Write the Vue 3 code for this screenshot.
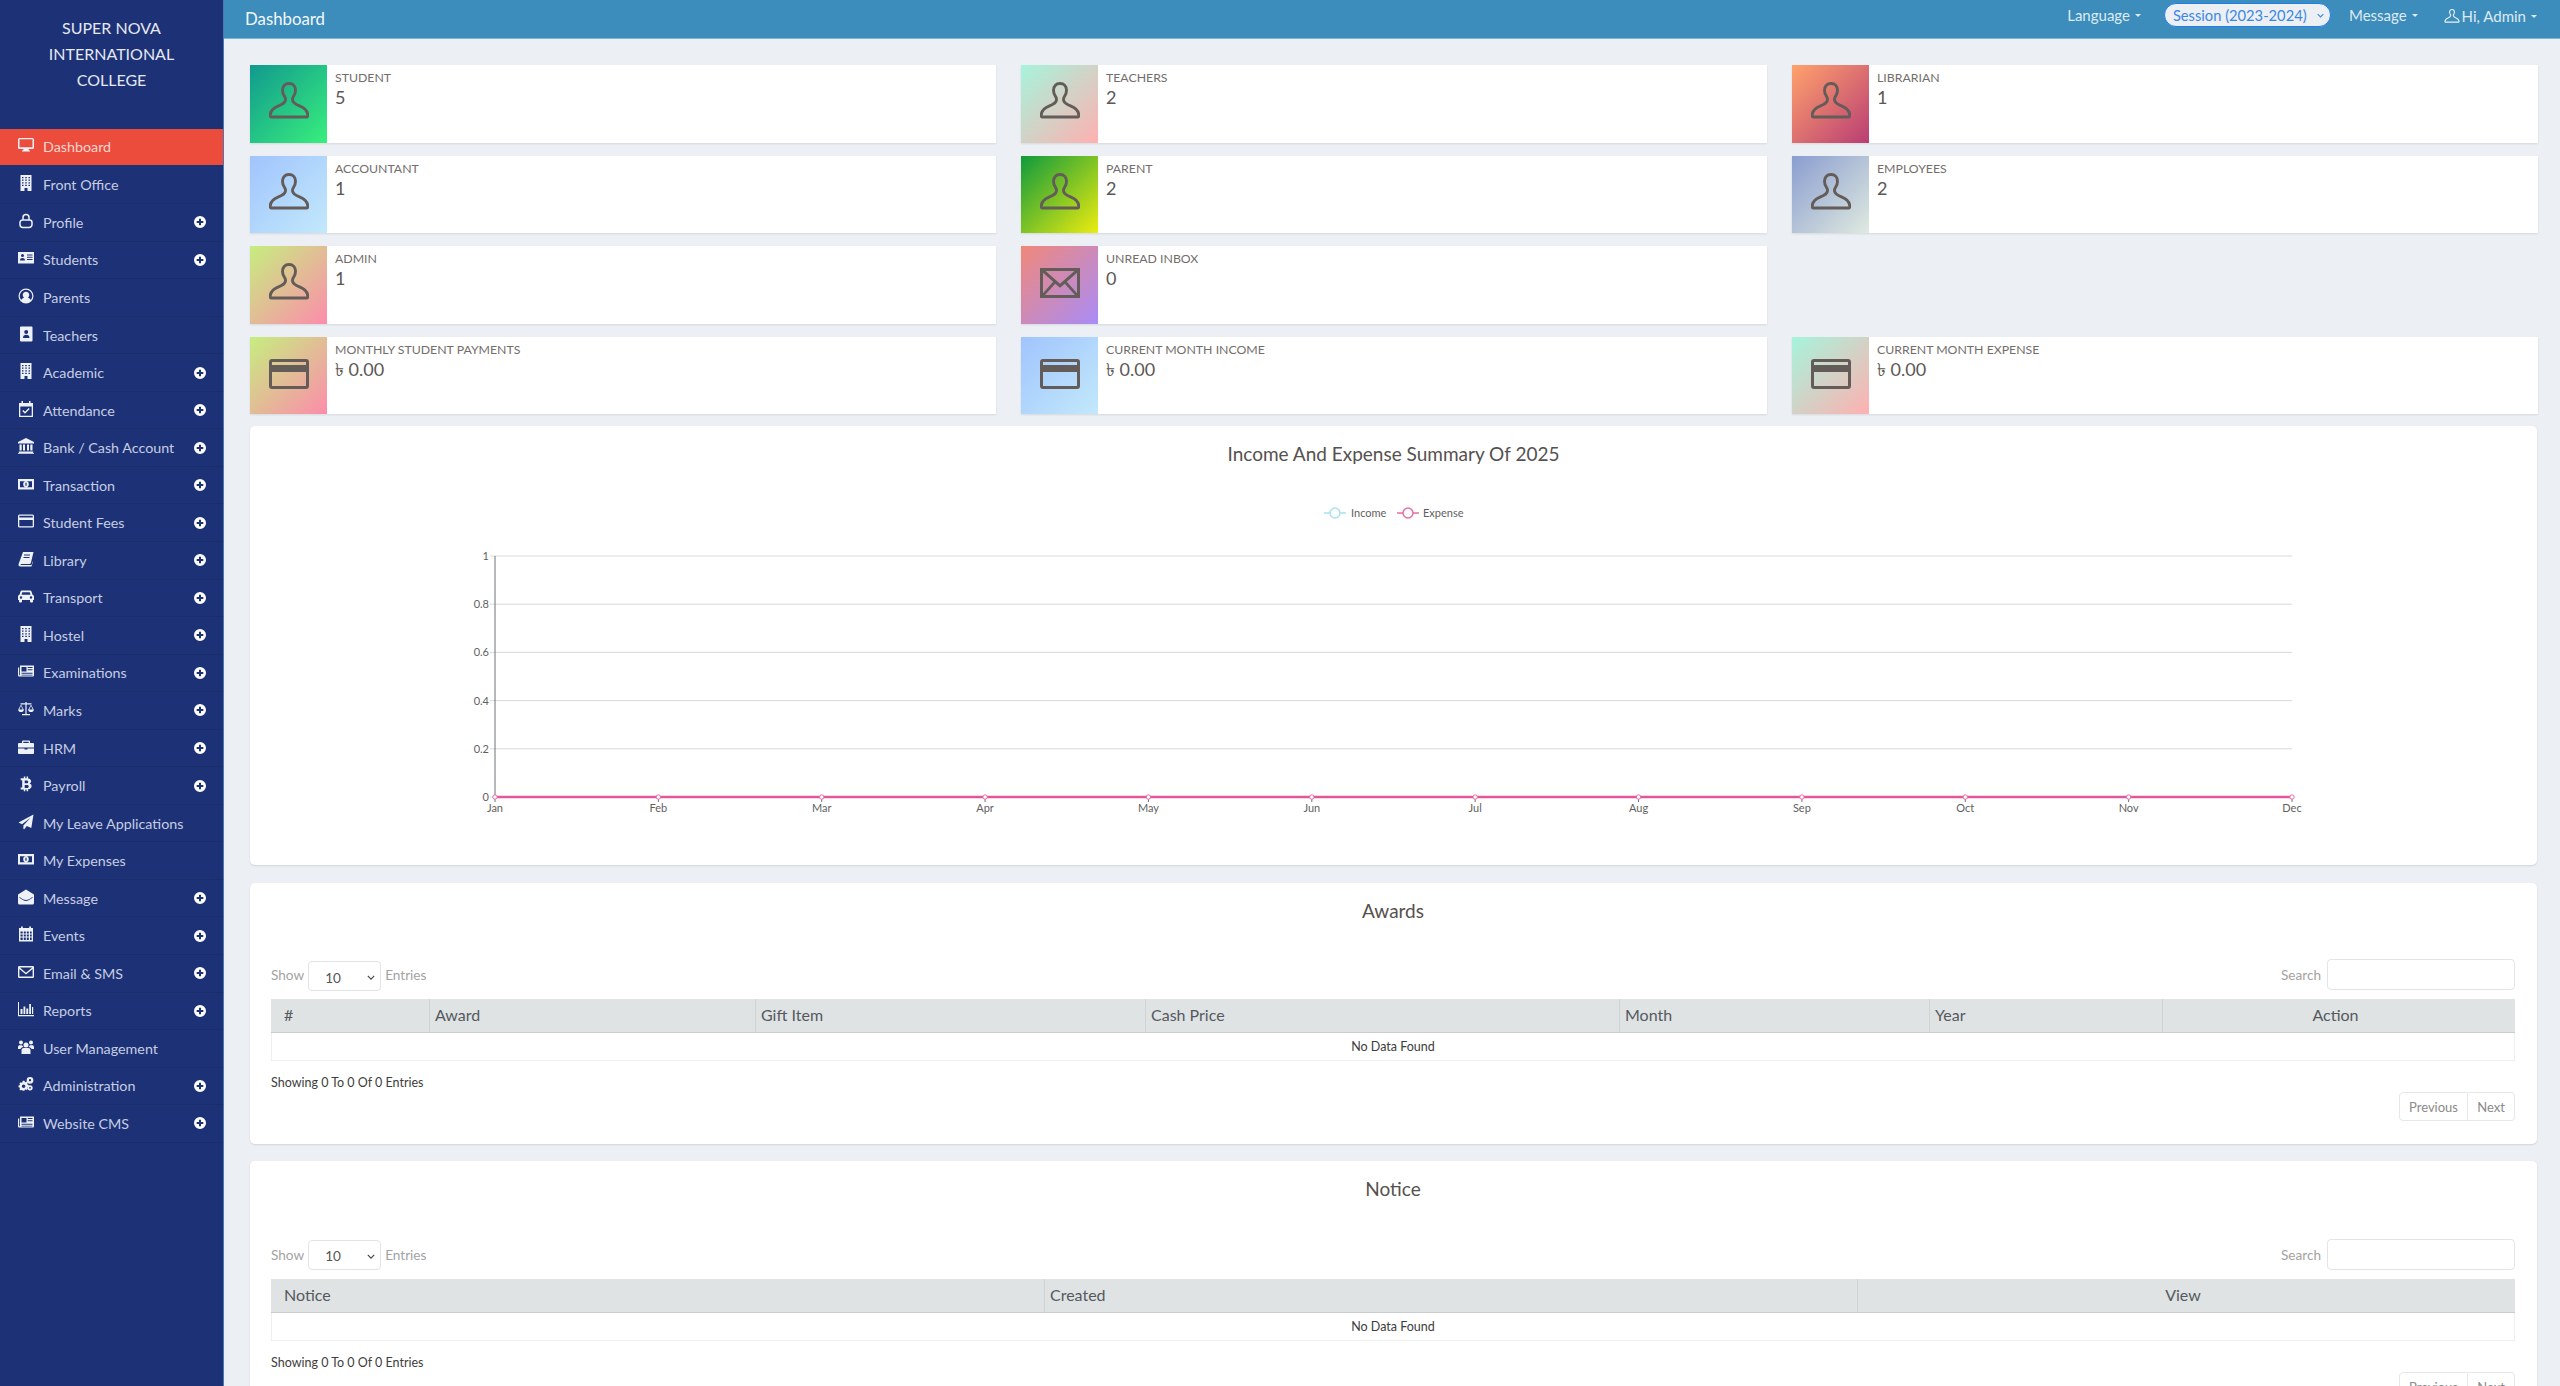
<script setup>
const menu = [
  { label: 'Dashboard', icon: 'monitor', active: true },
  { label: 'Front Office', icon: 'building' },
  { label: 'Profile', icon: 'lock', more: true },
  { label: 'Students', icon: 'idcard', more: true },
  { label: 'Parents', icon: 'usercircle' },
  { label: 'Teachers', icon: 'contact' },
  { label: 'Academic', icon: 'building', more: true },
  { label: 'Attendance', icon: 'calcheck', more: true },
  { label: 'Bank / Cash Account', icon: 'bank', more: true },
  { label: 'Transaction', icon: 'money', more: true },
  { label: 'Student Fees', icon: 'card', more: true },
  { label: 'Library', icon: 'book', more: true },
  { label: 'Transport', icon: 'car', more: true },
  { label: 'Hostel', icon: 'building', more: true },
  { label: 'Examinations', icon: 'news', more: true },
  { label: 'Marks', icon: 'scale', more: true },
  { label: 'HRM', icon: 'briefcase', more: true },
  { label: 'Payroll', icon: 'bitcoin', more: true },
  { label: 'My Leave Applications', icon: 'plane' },
  { label: 'My Expenses', icon: 'money' },
  { label: 'Message', icon: 'envelopeopen', more: true },
  { label: 'Events', icon: 'calendar', more: true },
  { label: 'Email & SMS', icon: 'mail', more: true },
  { label: 'Reports', icon: 'chart', more: true },
  { label: 'User Management', icon: 'users' },
  { label: 'Administration', icon: 'gears', more: true },
  { label: 'Website CMS', icon: 'news', more: true }
]

const stats = [
  { label: 'Student', value: '5', icon: 'user', grad: 'g-student' },
  { label: 'Teachers', value: '2', icon: 'user', grad: 'g-teacher' },
  { label: 'Librarian', value: '1', icon: 'user', grad: 'g-librarian' },
  { label: 'Accountant', value: '1', icon: 'user', grad: 'g-blue' },
  { label: 'Parent', value: '2', icon: 'user', grad: 'g-parent' },
  { label: 'Employees', value: '2', icon: 'user', grad: 'g-employee' },
  { label: 'Admin', value: '1', icon: 'user', grad: 'g-admin' },
  { label: 'Unread Inbox', value: '0', icon: 'mail', grad: 'g-inbox' },
  null,
  { label: 'Monthly Student Payments', value: '৳ 0.00', icon: 'card', grad: 'g-admin' },
  { label: 'Current Month Income', value: '৳ 0.00', icon: 'card', grad: 'g-blue' },
  { label: 'Current Month Expense', value: '৳ 0.00', icon: 'card', grad: 'g-teacher' }
]

/* chart geometry */
const chartLeft = 245
const chartRight = 2042
const months = ['Jan', 'Feb', 'Mar', 'Apr', 'May', 'Jun', 'Jul', 'Aug', 'Sep', 'Oct', 'Nov', 'Dec']
const monthX = (i) => chartLeft + (i * (chartRight - chartLeft)) / 11
const ticks = [
  { label: '1', y: 70 },
  { label: '0.8', y: 118.2 },
  { label: '0.6', y: 166.4 },
  { label: '0.4', y: 214.6 },
  { label: '0.2', y: 262.8 },
  { label: '0', y: 311 }
]

const tables = [
  {
    title: 'Awards',
    key: 'awards',
    cols: [
      { name: '#', w: 159, pad: true },
      { name: 'Award', w: 326 },
      { name: 'Gift Item', w: 390 },
      { name: 'Cash Price', w: 474 },
      { name: 'Month', w: 310 },
      { name: 'Year', w: 233 },
      { name: 'Action', w: 352, center: true }
    ]
  },
  {
    title: 'Notice',
    key: 'notice',
    cols: [
      { name: 'Notice', w: 774, pad: true },
      { name: 'Created', w: 813 },
      { name: 'View', w: 657, center: true }
    ]
  }
]
</script>

<template>
  <div class="page">
    <!-- Shared icon shapes -->
    <svg class="defs" width="0" height="0">
      <defs>
        <symbol id="monitor" viewBox="0 0 16 16"><path fill="currentColor" fill-rule="evenodd" d="M1.5 1h13A1.5 1.5 0 0 1 16 2.5v8a1.5 1.5 0 0 1-1.5 1.5H10.5l.5 1.5h1v1H4v-1h1l.5-1.5H1.5A1.5 1.5 0 0 1 0 10.5v-8A1.5 1.5 0 0 1 1.5 1zm0 1.3v7.900h13V2.300z"/></symbol>
        <symbol id="building" viewBox="0 0 16 16"><path fill="currentColor" fill-rule="evenodd" d="M2.5 0h11v16H9.5v-3h-3v3h-4zM4 2v1.200h1.500V2zm3.200 0v1.200h1.600V2zm3.300 0v1.200H12V2zM4 4.600v1.200h1.500V4.600zm3.200 0v1.200h1.600V4.600zm3.300 0v1.200H12V4.600zM4 7.200v1.200h1.500V7.200zm3.200 0v1.200h1.600V7.200zm3.300 0v1.200H12V7.200zM4 9.800V11h1.500V9.800zm3.200 0V11h1.600V9.800zm3.300 0V11H12V9.800z"/></symbol>
        <symbol id="lock" viewBox="0 0 16 16"><path fill="none" stroke="currentColor" stroke-width="1.5" d="M5 7V4.500a3 3 0 0 1 6 0V7M4.500 7h7A2.500 2.500 0 0 1 14 9.500v2a3 3 0 0 1-3 3H5a3 3 0 0 1-3-3v-2A2.500 2.500 0 0 1 4.500 7z"/></symbol>
        <symbol id="idcard" viewBox="0 0 16 16"><path fill="currentColor" fill-rule="evenodd" d="M0 2h16v11.500H0zM4.500 4a1.500 1.500 0 1 0 0 3 1.500 1.500 0 0 0 0-3zM2 10.500h5C7 8.800 6 8 4.500 8S2 8.800 2 10.500zM9 4.500V5.500h5.500V4.500zM9 6.800v1h5.500v-1zM9 9v1h5.500V9z"/></symbol>
        <symbol id="usercircle" viewBox="0 0 16 16"><path fill="currentColor" fill-rule="evenodd" d="M8 .5a7.500 7.500 0 1 0 0 15 7.500 7.500 0 0 0 0-15zm0 1.300a6.200 6.200 0 0 1 4.800 10.100C12 10.500 10.800 10 10 9.700a3.300 3.300 0 1 0-4 0c-.8.300-2 .8-2.800 2.200A6.200 6.200 0 0 1 8 1.800z"/></symbol>
        <symbol id="contact" viewBox="0 0 16 16"><path fill="currentColor" fill-rule="evenodd" d="M3 .5h10.500a1 1 0 0 1 1 1v13a1 1 0 0 1-1 1H3a1 1 0 0 1-1-1v-13a1 1 0 0 1 1-1zM8.200 4a2 2 0 1 0 0 4 2 2 0 0 0 0-4zM5 12h6.500c0-2-1.300-3.200-3.200-3.200S5 10 5 12z"/></symbol>
        <symbol id="calcheck" viewBox="0 0 16 16"><path fill="currentColor" fill-rule="evenodd" d="M3.500 0h1.500v2h6V0h1.500v2H15v14H1V2h2.500zM2.300 5.500v9.200h11.400V5.500zM7 12.800l-2.700-2.700 1-1L7 10.800l3.700-3.700 1 1z"/></symbol>
        <symbol id="bank" viewBox="0 0 16 16"><path fill="currentColor" d="M8 0l8 4v1.500H0V4zM1.500 6.500h2.200v6H1.500zM5 6.500h2v6H5zM9 6.500h2v6H9zM12.300 6.500h2.200v6h-2.200zM.8 13.500h14.400V15H.8zM0 15.300h16V16H0z"/></symbol>
        <symbol id="money" viewBox="0 0 16 16"><path fill="currentColor" fill-rule="evenodd" d="M0 3h16v10.500H0zM2 5.200v6.100h12V5.200zM8 5.300a2.800 3 0 1 1 0 6 2.800 3 0 0 1 0-6zM7.400 6.800v3h1.200v-3z"/></symbol>
        <symbol id="card" viewBox="0 0 16 16"><path fill="currentColor" fill-rule="evenodd" d="M1.500 1.500h13A1.500 1.500 0 0 1 16 3v10a1.500 1.500 0 0 1-1.500 1.500h-13A1.500 1.500 0 0 1 0 13V3a1.500 1.500 0 0 1 1.500-1.500zm-.2 1.300V4.500h13.400V2.800zm0 4.200v6.200h13.400V7z"/></symbol>
        <symbol id="book" viewBox="0 0 16 16"><path fill="currentColor" fill-rule="evenodd" d="M5 1h10.500l-2.500 10.500c-.3 1-.8 1.500-2 1.500H3.500c-.8 0-1 .5-.8 1h9.800c.8 0 1.200-.4 1.500-1l.6-2.500.4.500-1.600 4.500H2.500C1 15.500.2 14.300.6 13zM6 3.500v1h6v-1zM5.500 6v1h6V6z"/></symbol>
        <symbol id="car" viewBox="0 0 16 16"><path fill="currentColor" fill-rule="evenodd" d="M4 2.500h8c.7 0 1.300.4 1.500 1l1 3.200c.9.300 1.500 1 1.500 2V12h-1v1.500a1 1 0 0 1-1 1h-1a1 1 0 0 1-1-1V12H4v1.500a1 1 0 0 1-1 1H2a1 1 0 0 1-1-1V12H0V8.700c0-1 .6-1.700 1.500-2l1-3.200c.2-.6.800-1 1.500-1zM4.300 4.200L3.500 6.700h9l-.8-2.500zM3 8.300a1.200 1.200 0 1 0 0 2.400 1.200 1.200 0 0 0 0-2.400zm10 0a1.200 1.200 0 1 0 0 2.400 1.200 1.200 0 0 0 0-2.400z"/></symbol>
        <symbol id="news" viewBox="0 0 16 16"><path fill="currentColor" fill-rule="evenodd" d="M2 2.500h14v10a1 1 0 0 1-1 1H1a1 1 0 0 1-1-1V4.500h1.200v7.500a.4.4 0 0 0 .8 0zM3.500 4v4.500h5V4zm6.200 0v1h4.800V4zm0 2.200v1h4.800v-1zM3.500 9.800v1h11v-1zm0 1.900v.8h11v-.8z"/></symbol>
        <symbol id="scale" viewBox="0 0 16 16"><path fill="currentColor" fill-rule="evenodd" d="M7.400 1h1.200v1.200h4.900v1H12.900l2.900 5.500c0 1.500-1.300 2.300-2.800 2.300s-2.800-.8-2.800-2.300L13 3.500H8.600V13H12v1.300H4V13h3.400V3.500H3l2.800 5.200c0 1.500-1.300 2.300-2.800 2.300s-2.800-.8-2.800-2.300L3.100 3.200H2.500v-1h4.900zM3 4.800L1.300 8.500h3.400zm10 0l-1.700 3.700h3.400z"/></symbol>
        <symbol id="briefcase" viewBox="0 0 16 16"><path fill="currentColor" fill-rule="evenodd" d="M5 1.500h6A1 1 0 0 1 12 2.500V4h3a1 1 0 0 1 1 1v3.500H0V5a1 1 0 0 1 1-1h3V2.500a1 1 0 0 1 1-1zM5.300 2.800V4h5.400V2.800zM0 9.500h6.500v1h3v-1H16V14a1 1 0 0 1-1 1H1a1 1 0 0 1-1-1z"/></symbol>
        <symbol id="bitcoin" viewBox="0 0 16 16"><path fill="currentColor" fill-rule="evenodd" d="M5.800.5h1.500v1.800h1.300V.5h1.500v1.900c1.900.3 3 1.300 3 2.800 0 1-.5 1.800-1.500 2.300 1.300.4 2 1.300 2 2.600 0 2-1.500 3.100-3.500 3.200v1.900H8.600v-1.800H7.300v1.800H5.800v-1.800H2.700v-2h1.500V4.300H2.700v-2h3.100zM6.700 4.500v2.700h2c1 0 1.500-.5 1.500-1.300s-.5-1.400-1.500-1.400zm0 4.500v2.900h2.400c1.100 0 1.600-.6 1.600-1.500 0-.8-.5-1.400-1.600-1.400z"/></symbol>
        <symbol id="plane" viewBox="0 0 16 16"><path fill="currentColor" d="M15.500.5L13.300 14 8.800 12l-2.600 3.300-.8-.2V11.500L12.500 3.800 4 10.200.5 8.500z"/></symbol>
        <symbol id="envelopeopen" viewBox="0 0 16 16"><path fill="currentColor" fill-rule="evenodd" d="M8 .5l8 5V14a1.500 1.500 0 0 1-1.500 1.500h-13A1.500 1.500 0 0 1 0 14V5.500zM1.500 7.800v1c2.500 2 4.500 3.200 6.500 3.200s4-1.200 6.500-3.200v-1C12 10 10 11 8 11s-4-1-6.500-3.200z"/></symbol>
        <symbol id="calendar" viewBox="0 0 16 16"><path fill="currentColor" fill-rule="evenodd" d="M3 .5h1.800V2h6.400V.5H13V2h2v13.500H1V2h2zM2.500 5.500v1.900h2.200V5.500zm3.300 0v1.900h2V5.500zm3 0v1.900h2V5.500zm3.200 0v1.900h1.700V5.500zM2.500 8.500v1.900h2.200V8.500zm3.300 0v1.900h2V8.500zm3 0v1.900h2V8.500zm3.200 0v1.900h1.700V8.500zM2.500 11.500v2.600h2.200v-2.600zm3.300 0v2.600h2v-2.600zm3 0v2.600h2v-2.600zm3.200 0v2.600h1.700v-2.600z"/></symbol>
        <symbol id="mail" viewBox="0 0 16 16"><path fill="currentColor" fill-rule="evenodd" d="M1.200 2h13.600A1.200 1.200 0 0 1 16 3.200v9.600a1.200 1.200 0 0 1-1.200 1.200H1.200A1.200 1.200 0 0 1 0 12.800V3.200A1.200 1.200 0 0 1 1.200 2zm.6 1.400L8 8.700l6.200-5.300zM1.400 5v7.600h13.200V5L8 10.500z"/></symbol>
        <symbol id="chart" viewBox="0 0 16 16"><path fill="currentColor" d="M0 1h1v13h15v1.200H0zM2.500 8h2v5h-2zM5.500 5.500h1.800V13H5.500zM8.300 7.500h1.900V13H8.300zM11.200 3h1.800v10h-1.800zM14 6h1.200v7H14z"/></symbol>
        <symbol id="users" viewBox="0 0 16 16"><path fill="currentColor" d="M8 3.500a2.500 2.500 0 1 1 0 5 2.500 2.500 0 0 1 0-5zM3 1.500a2 2 0 1 1 0 4 2 2 0 0 1 0-4zM13 1.500a2 2 0 1 1 0 4 2 2 0 0 1 0-4zM3.500 15v-3.500c0-1.700 1-2.500 2.300-2.500h4.400c1.300 0 2.300.8 2.300 2.500V15zM0 10V8c0-1.200.8-1.800 2-1.800h2c.6.800 1 1.400 1.500 1.800-1.700.4-2.600 1-3 2zM16 10V8c0-1.200-.8-1.800-2-1.800h-2c-.6.800-1 1.400-1.500 1.800 1.700.4 2.600 1 3 2z"/></symbol>
        <symbol id="gears" viewBox="-1 -1 18 18"><path fill="currentColor" fill-rule="evenodd" d="M4.300 4.300h2l.3 1.200 1 .4 1-.6 1.400 1.400-.6 1 .4 1 1.200.3v2l-1.200.3-.4 1 .6 1-1.400 1.400-1-.6-1 .4-.3 1.200h-2L4 15.100l-1-.4-1 .6L.6 13.900l.6-1-.4-1L-.4 11.600v-2l1.200-.3.4-1-.6-1L2 5.900l1 .6 1-.4zM5.300 8.500a2 2 0 1 0 0 4 2 2 0 0 0 0-4z"/><path fill="currentColor" fill-rule="evenodd" d="M12.500 0a3.800 3.800 0 1 1 0 7.600 3.800 3.800 0 0 1 0-7.600zm0 2.500a1.300 1.300 0 1 0 0 2.600 1.300 1.300 0 0 0 0-2.600zM12.500 9.300a3 3 0 1 1 0 6 3 3 0 0 1 0-6zm0 2a1 1 0 1 0 0 2 1 1 0 0 0 0-2z"/></symbol>
        <symbol id="user" viewBox="0 0 40 40"><path fill="none" stroke="currentColor" stroke-width="2.900" stroke-linejoin="round" d="M20 1.500c-4.200 0-6.500 3-6.500 6.800 0 3 .8 5 2.300 6.700.8 1 .8 2.300.5 3.600-.5 2-1.800 3.300-6.800 5.200-5 1.900-8 4.800-8.300 9.400-.1 1 .2 1.800 1.300 1.800h35c1.100 0 1.400-.8 1.300-1.800-.3-4.600-3.300-7.500-8.300-9.400-5-1.900-6.300-3.200-6.800-5.200-.3-1.300-.3-2.600.5-3.600 1.500-1.700 2.300-3.700 2.300-6.700 0-3.800-2.300-6.800-6.500-6.800z"/></symbol>
        <symbol id="bigcard" viewBox="0 0 40 30"><path fill="currentColor" fill-rule="evenodd" d="M3 0h34a3 3 0 0 1 3 3v24a3 3 0 0 1-3 3H3a3 3 0 0 1-3-3V3a3 3 0 0 1 3-3zm0 3v3h34V3zm0 10v14h34V13z"/></symbol>
        <symbol id="bigmail" viewBox="0 0 40 30"><path fill="currentColor" fill-rule="evenodd" d="M0 0h40v30H0zM5.500 3L20 15.800 34.500 3zM3 4.800v20.500L13.200 13.800zM37 4.800L26.800 13.800 37 25.300zM5 27h30L24.800 15.700 20 19.800l-4.800-4.100z"/></symbol>
      </defs>
    </svg>

    <!-- Sidebar -->
    <aside class="sidebar">
      <div class="brand">SUPER NOVA<br />INTERNATIONAL<br />COLLEGE</div>
      <ul class="menu">
        <li v-for="item in menu" :key="item.label" class="menu-item" :class="{ active: item.active }">
          <svg class="menu-icon"><use :href="'#' + item.icon" /></svg>
          <span class="menu-label">{{ item.label }}</span>
          <svg v-if="item.more" class="menu-more" viewBox="0 0 12 12">
            <path fill="#fff" fill-rule="evenodd" d="M6 0a6 6 0 1 1 0 12A6 6 0 0 1 6 0zM5 2.700V5H2.700v2H5v2.300h2V7h2.300V5H7V2.700z" />
          </svg>
        </li>
      </ul>
    </aside>

    <div class="main">
      <!-- Top bar -->
      <header class="topbar">
        <span class="page-title">Dashboard</span>
        <nav class="top-nav">
          <span class="top-link lang">Language <i class="caret"></i></span>
          <span class="session">Session (2023-2024)
            <svg class="session-chev" viewBox="0 0 10 6"><path d="M1 1l4 4 4-4" fill="none" stroke="currentColor" stroke-width="1.5" /></svg>
          </span>
          <span class="top-link msg">Message <i class="caret"></i></span>
          <span class="top-link who">
            <svg class="who-icon"><use href="#user" /></svg>
            Hi, Admin <i class="caret"></i>
          </span>
        </nav>
      </header>

      <section class="content">
        <!-- Counters -->
        <div class="stats">
          <template v-for="(s, i) in stats" :key="i">
            <div v-if="s" class="stat">
              <div class="stat-icon" :class="s.grad">
                <svg v-if="s.icon === 'user'" class="ico-user"><use href="#user" /></svg>
                <svg v-else-if="s.icon === 'card'" class="ico-wide"><use href="#bigcard" /></svg>
                <svg v-else class="ico-wide"><use href="#bigmail" /></svg>
              </div>
              <div class="stat-body">
                <div class="stat-label">{{ s.label }}</div>
                <div class="stat-value">{{ s.value }}</div>
              </div>
            </div>
            <div v-else class="stat-empty"></div>
          </template>
        </div>

        <!-- Chart -->
        <div class="panel chart-panel">
          <h3 class="panel-title chart-title">Income And Expense Summary Of 2025</h3>
          <svg class="chart" viewBox="0 0 2287 370" width="2287" height="370">
            <g class="legend">
              <line x1="1074" x2="1096" y1="27" y2="27" stroke="#a9e3ea" stroke-width="1.5" />
              <circle cx="1085" cy="27" r="5" fill="#fff" stroke="#a9e3ea" stroke-width="1.5" />
              <text x="1101" y="31" class="chart-text">Income</text>
              <line x1="1147" x2="1169" y1="27" y2="27" stroke="#e86ea3" stroke-width="1.5" />
              <circle cx="1158" cy="27" r="5" fill="#fff" stroke="#e86ea3" stroke-width="1.5" />
              <text x="1173" y="31" class="chart-text">Expense</text>
            </g>
            <g v-for="t in ticks" :key="t.label">
              <line :x1="chartLeft - 5" :x2="chartRight" :y1="t.y" :y2="t.y" stroke="#d9d9d9" />
              <text :x="chartLeft - 6" :y="t.y + 4" text-anchor="end" class="chart-text">{{ t.label }}</text>
            </g>
            <line :x1="chartLeft" :x2="chartLeft" y1="70" y2="311" stroke="#6e7079" />
            <g v-for="(m, i) in months" :key="m">
              <line :x1="monthX(i)" :x2="monthX(i)" y1="311" y2="316" stroke="#6e7079" />
              <text :x="monthX(i)" y="326" text-anchor="middle" class="chart-text">{{ m }}</text>
            </g>
            <line :x1="chartLeft" :x2="chartRight" y1="311" y2="311" stroke="#e0589c" stroke-width="2.5" />
            <circle v-for="(m, i) in months" :key="'p' + m" :cx="monthX(i)" cy="311" r="2.2" fill="#fff" stroke="#e86ea3" />
          </svg>
        </div>

        <!-- Data tables -->
        <div v-for="t in tables" :key="t.title" class="panel table-panel" :class="t.key">
          <h3 class="panel-title">{{ t.title }}</h3>
          <div class="table-tools">
            <div class="tool">
              <span>Show</span>
              <span class="fake-select">10
                <svg class="select-chev" viewBox="0 0 10 6"><path d="M1 1l4 4 4-4" fill="none" stroke="#444" stroke-width="1.4" /></svg>
              </span>
              <span>Entries</span>
            </div>
            <div class="tool">
              <span>Search</span>
              <span class="fake-input"></span>
            </div>
          </div>
          <div class="grid-table">
            <div class="grid-head">
              <div
                v-for="c in t.cols"
                :key="c.name"
                class="th"
                :class="{ pad: c.pad, center: c.center }"
                :style="{ width: c.w + 'px' }"
              >{{ c.name }}</div>
            </div>
            <div class="grid-empty">No Data Found</div>
          </div>
          <div class="table-info">Showing 0 To 0 Of 0 Entries</div>
          <div class="pager">
            <span class="page-btn prev">Previous</span>
            <span class="page-btn next">Next</span>
          </div>
        </div>
      </section>
    </div>
  </div>
</template>

<style>
html, body {
  margin: 0;
  height: 100%;
  overflow: hidden;
  background: #eceff4;
}
</style>

<style scoped>
.page {
  display: flex;
  height: 1386px;
  overflow: hidden;
  font-family: "Lato", "Open Sans", sans-serif;
  color: #5c5855;
}

.defs {
  position: absolute;
}

/* Sidebar */
.sidebar {
  width: 223px;
  flex: none;
  background: #1d3276;
  border-right: 1px solid #4a78b5;
}

.brand {
  height: 129px;
  box-sizing: border-box;
  padding-top: 15px;
  text-align: center;
  font-size: 16px;
  line-height: 26px;
  color: #e4e8f2;
}

.menu {
  list-style: none;
  margin: 0;
  padding: 0;
}

.menu-item {
  height: 37.55px;
  box-sizing: border-box;
  display: flex;
  align-items: center;
  padding-left: 18px;
  border-bottom: 1px solid #1a2d6b;
  color: #c6cde3;
  font-size: 14.3px;
}

.menu-item.active {
  background: #ec4c3c;
  color: #f8d6d0;
  border-bottom-color: #ec4c3c;
  height: 36px;
  margin-bottom: 1.55px;
}

.menu-icon {
  width: 16px;
  height: 16px;
  flex: none;
  margin-right: 9px;
  margin-top: -3px;
  color: #eef1f8;
}

.menu-label {
  flex: 1;
}

.menu-more {
  width: 12px;
  height: 12px;
  margin-right: 17px;
  flex: none;
}

/* Top bar */
.main {
  flex: 1;
  min-width: 0;
}

.topbar {
  height: 39px;
  box-sizing: border-box;
  display: flex;
  justify-content: space-between;
  align-items: center;
  padding: 0 23px 8px 21px;
  background: #3c8dbc;
  border-bottom: 1px solid #7fb4d6;
  color: #dfeaf3;
}

.page-title {
  margin-top: 6px;
  font-size: 16.8px;
  color: #f3f7fa;
}

.top-nav {
  display: flex;
  align-items: center;
  font-size: 15px;
}

.top-link {
  display: inline-flex;
  align-items: center;
  gap: 5px;
}

.caret {
  display: inline-block;
  width: 0;
  height: 0;
  border-left: 3.5px solid transparent;
  border-right: 3.5px solid transparent;
  border-top: 3.5px solid currentColor;
}

.lang {
  margin-right: 23px;
}

.session {
  width: 167px;
  height: 24px;
  box-sizing: border-box;
  display: flex;
  align-items: center;
  justify-content: space-between;
  padding: 0 6px 0 8px;
  margin-right: 18px;
  background: #eceff4;
  border: 1px solid #1e80f0;
  border-radius: 12px;
  color: #3a88e6;
  font-size: 14.7px;
}

.session-chev {
  width: 7px;
  height: 5px;
}

.msg {
  margin-right: 26px;
}

.who {
  margin-top: 2px;
}

.who-icon {
  width: 16px;
  height: 15px;
  margin-right: -3px;
  color: #eaf1f6;
}

/* Content */
.content {
  padding: 26px 23px 0 26px;
  display: flex;
  flex-direction: column;
}

.stats {
  display: grid;
  grid-template-columns: repeat(3, 746px);
  column-gap: 25px;
  grid-auto-rows: 77.5px;
  row-gap: 13px;
}

.stat {
  display: flex;
  background: #fff;
  box-shadow: 0 1px 2px rgba(0, 0, 0, .1);
}

.stat-icon {
  width: 77px;
  flex: none;
  display: flex;
  align-items: center;
  justify-content: center;
  padding-bottom: 3px;
  box-sizing: border-box;
  color: #635c58;
}

.ico-user {
  width: 40px;
  height: 40px;
}

.ico-wide {
  width: 40px;
  height: 30px;
}

.g-student { background: linear-gradient(135deg, #11998e, #38ef7d); }
.g-teacher { background: linear-gradient(135deg, #a6f4dc, #ffb0b0); }
.g-librarian { background: linear-gradient(135deg, #ffa26c, #b93e74); }
.g-blue { background: linear-gradient(135deg, #a1c4fd, #c2e9fb); }
.g-parent { background: linear-gradient(135deg, #0f9a3c, #ecec10); }
.g-employee { background: linear-gradient(135deg, #8a9dd0, #dfeadf); }
.g-admin { background: linear-gradient(135deg, #c6ee7f, #fd8cab); }
.g-inbox { background: linear-gradient(135deg, #f0887a, #a98cf8); }

.stat-body {
  padding: 5px 9px 5px 8px;
}

.stat-label {
  font-size: 12.3px;
  line-height: 16px;
  text-transform: uppercase;
  color: #736e6b;
}

.stat-value {
  font-size: 18px;
  line-height: 22px;
  color: #5c5855;
}

/* Panels */
.panel {
  background: #fff;
  border-radius: 5px;
  box-shadow: 0 1px 2px rgba(0, 0, 0, .12);
}

.panel-title {
  margin: 0;
  text-align: center;
  font-size: 19px;
  font-weight: 400;
  line-height: 24px;
  color: #55514e;
}

.chart-panel {
  margin-top: 12px;
  height: 439px;
  padding-top: 16px;
  box-sizing: border-box;
}

.chart {
  display: block;
  margin-top: 20px;
}

.chart-text {
  font-size: 11px;
  fill: #5f5f5f;
}

.table-panel {
  margin-top: 18px;
  height: 261px;
  padding: 16px 22px 0 21px;
  box-sizing: border-box;
}

.table-panel + .table-panel {
  margin-top: 17px;
}

.table-tools {
  display: flex;
  justify-content: space-between;
  align-items: center;
  margin-top: 38px;
  height: 31px;
  font-size: 13.6px;
  color: #a3a3a3;
}

.awards .table-tools {
  margin-top: 36px;
}

.awards .fake-select {
  margin-top: 3px;
}

.tool {
  display: flex;
  align-items: center;
  gap: 4px;
}

.fake-select {
  width: 73px;
  height: 30px;
  box-sizing: border-box;
  display: flex;
  align-items: center;
  justify-content: space-between;
  padding: 3px 5px 0 16px;
  border: 1px solid #e2e4e8;
  border-radius: 4px;
  color: #555;
}

.select-chev {
  width: 8px;
  height: 5px;
}

.fake-input {
  width: 188px;
  height: 31px;
  box-sizing: border-box;
  margin-left: 2px;
  border: 1px solid #e2e4e8;
  border-radius: 4px;
}

.grid-table {
  margin-top: 9px;
}

.grid-head {
  display: flex;
  height: 34px;
  background: #dfe3e3;
  border-bottom: 1px solid #c9cdcd;
  box-sizing: border-box;
}

.th {
  box-sizing: border-box;
  height: 100%;
  padding-left: 5px;
  line-height: 32px;
  font-size: 16px;
  color: #55595f;
  border-right: 1px solid #cfd3d3;
}

.th:last-child {
  border-right: 0;
}

.th.pad {
  padding-left: 13px;
}

.th.center {
  padding: 0 7px 0 0;
  text-align: center;
}

.grid-empty {
  height: 28px;
  box-sizing: border-box;
  border: 1px solid #eceef0;
  border-top: 0;
  line-height: 27px;
  text-align: center;
  font-size: 12.5px;
  color: #3d3d3d;
}

.table-info {
  margin-top: 14px;
  font-size: 12.5px;
  line-height: 16px;
  color: #3d3d3d;
}

.pager {
  display: flex;
  justify-content: flex-end;
  margin-top: 1px;
}

.page-btn {
  height: 29px;
  box-sizing: border-box;
  display: flex;
  align-items: center;
  justify-content: center;
  border: 1px solid #e6e8eb;
  font-size: 13px;
  color: #8a8a8a;
}

.prev {
  width: 69px;
  border-radius: 4px 0 0 4px;
}

.next {
  width: 47px;
  border-left: 0;
  border-radius: 0 4px 4px 0;
}
</style>
